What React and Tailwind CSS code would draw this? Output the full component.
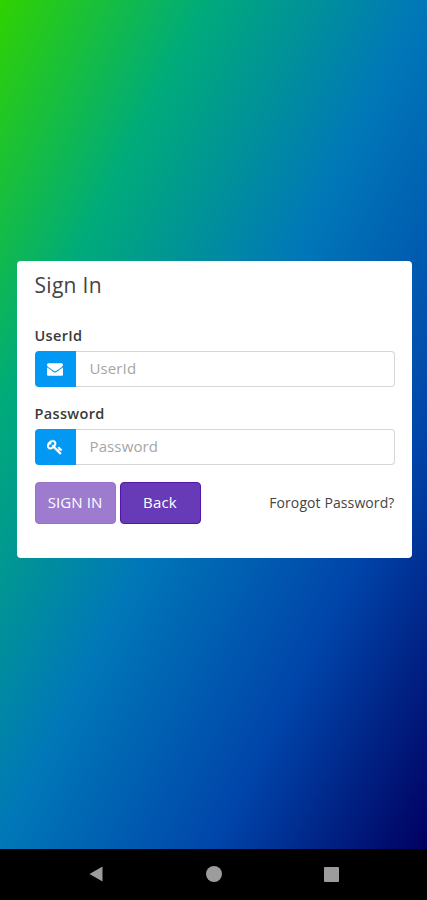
function EnvelopeIcon() {
  return (
    <svg viewBox="0 0 1792 1792" className="size-4" fill="currentColor" aria-hidden="true">
      <path d="M1792 710v794q0 66-47 113t-113 47h-1472q-66 0-113-47t-47-113v-794q44 49 101 87 362 246 497 345 57 42 92.5 65.5t94.5 48 110 24.5h2q51 0 110-24.5t94.5-48 92.5-65.5q170-123 498-345 57-39 100-87zm0-294q0 79-49 151t-122 123q-376 261-468 325-10 7-42.5 31t-54 38.5-52 32.5-57.5 27-50 9h-2q-23 0-50-9t-57.5-27-52-32.5-54-38.5-42.5-31q-91-64-262-182.5t-205-142.5q-62-42-117-115.5t-55-136.5q0-78 41.5-130t118.5-52h1472q65 0 112.5 47t47.5 113z" />
    </svg>
  );
}

function KeyIcon() {
  return (
    <svg viewBox="0 0 1792 1792" className="size-4" fill="currentColor" stroke="currentColor" strokeWidth="50" aria-hidden="true">
      <path d="M832 512q0-80-56-136t-136-56-136 56-56 136q0 42 19 83-41-19-83-19-80 0-136 56t-56 136 56 136 136 56 136-56 56-136q0-42-19-83 41 19 83 19 80 0 136-56t56-136zm851 704q0 17-49 66t-66 49q-9 0-28.5-16t-36.5-33-38.5-40-24.5-26l-96 96 220 220q28 28 28 68 0 42-39 81t-81 39q-40 0-68-28l-671-671q-176 131-365 131-163 0-265.5-102.5t-102.5-265.5q0-160 95-313t248-248 313-95q163 0 265.5 102.5t102.5 265.5q0 189-131 365l355 355 96-96q-3-3-26-24.5t-40-38.5-33-36.5-16-28.5q0-17 49-66t66-49q13 0 23 10 6 6 46 44.5t82 79.5 86.5 86 73 78 28.5 41z" />
    </svg>
  );
}

function Field({ id, label, type, icon }) {
  return (
    <div className="flex flex-col">
      <label htmlFor={id} className="h-[26px] text-[14.5px] leading-[21px] font-semibold tracking-[0.35px] text-[#3a3a3a]">
        {label}
      </label>
      <div className="flex h-9">
        <span className="flex w-[41.5px] shrink-0 items-center justify-center rounded-l-[4px] bg-[#0398f4] pr-px text-white">
          {icon}
        </span>
        <input
          id={id}
          type={type}
          placeholder={label}
          className="min-w-0 flex-1 rounded-r-[4px] border border-l-0 border-[#d6d6d6] bg-white pr-[13px] pb-0.5 pl-[13.5px] text-[15px] tracking-[0.12px] text-[#333] outline-none placeholder:text-[#a6a6a6]"
        />
      </div>
    </div>
  );
}

export default function App() {
  return (
    <div className="flex h-[900px] w-[427px] flex-col overflow-hidden font-['Open_Sans',sans-serif]">
      <main className="h-[849px] bg-[linear-gradient(to_bottom_right,#30d200_0%,#00ab7a_24%,#0078b8_49.5%,#0045aa_75%,#000060_100%)] pt-[261px] pr-[15px] pl-[17px]">
        <section className="h-[297px] rounded-[4px] bg-white px-[17.5px] pt-[10px]">
          <h1 className="text-[21px] leading-[28px] font-normal tracking-[0.3px] text-[#444]">Sign In</h1>
          <form className="mt-[26.4px] flex flex-col gap-4" onSubmit={(e) => e.preventDefault()}>
            <Field id="userid" label="UserId" type="text" icon={<EnvelopeIcon />} />
            <Field id="password" label="Password" type="password" icon={<KeyIcon />} />
            <div className="mt-[0.6px] flex items-center">
              <button type="submit" className="h-[42px] w-[81px] rounded-[4px] border border-[#9872cb] bg-[#9d7bcf] pb-0.5 text-[15px] tracking-[0.1px] text-white">
                SIGN IN
              </button>
              <button type="button" className="ml-1 h-[42px] w-[81px] rounded-[4px] border border-[#5515a8] bg-[#673ab7] pb-0.5 text-[15px] tracking-[0.2px] text-white">
                Back
              </button>
              <a href="#" className="ml-auto text-[14px] tracking-[0.1px] whitespace-nowrap text-[#444]">
                Forogot Password?
              </a>
            </div>
          </form>
        </section>
      </main>
      <nav className="flex flex-1 items-center justify-between bg-black pr-[88px] pb-px pl-[89px] text-[#9c9c9c]">
        <svg viewBox="0 0 14 16" className="h-4 w-3.5" fill="currentColor" aria-hidden="true">
          <path d="M13.5 0.5v15L0.5 8z" />
        </svg>
        <span className="size-4 rounded-full bg-[#9c9c9c]" />
        <span className="size-[15px] rounded-[1px] bg-[#9c9c9c]" />
      </nav>
    </div>
  );
}
